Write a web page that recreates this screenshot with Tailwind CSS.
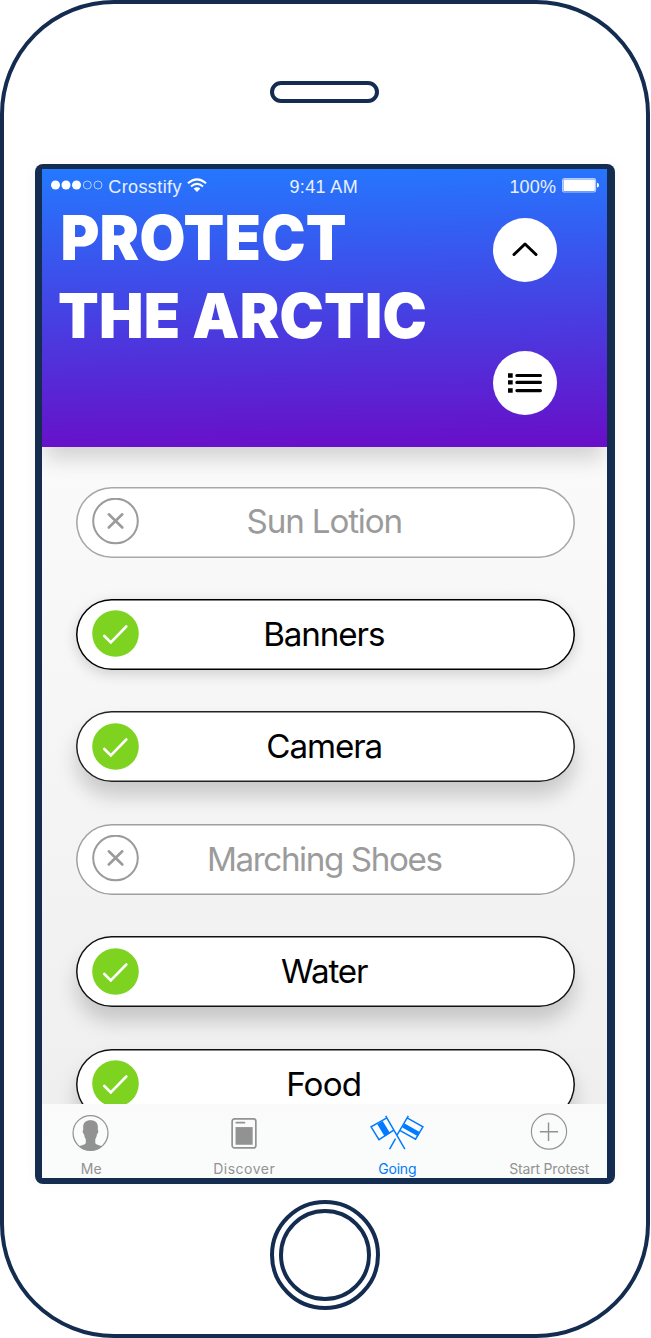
<!DOCTYPE html>
<html lang="en">
<head>
<meta charset="utf-8">
<title>Crosstify</title>
<script src="https://cdn.jsdelivr.net/npm/@tailwindcss/browser@4"></script>
</head>
<body class="bg-white font-['Inter',sans-serif] antialiased">
<div class="relative flex h-[1338px] w-[649.5px] flex-col items-center overflow-hidden rounded-[114px] border-4 border-[#132c50] bg-white">
  <div class="mt-[77px] h-[22px] w-[109px] shrink-0 rounded-full border-4 border-[#132c50]"></div>
  <!-- Screen -->
  <div class="mt-[61px] h-[1020px] w-[580px] shrink-0 rounded-[8px] bg-[#132c50] pt-[5px] pr-[7.5px] pb-[6px] pl-[7px] shadow-[0_0_14px_rgba(0,0,0,0.04)]">
    <div class="flex h-full flex-col overflow-hidden bg-linear-to-b from-[#ffffff] to-[#eeeeee]">
      <header class="relative z-10 h-[278px] shrink-0 bg-[linear-gradient(179deg,#2478ff_0%,#4640e2_52%,#6810c9_98%)] text-white shadow-[0_16px_20px_-4px_rgba(0,0,0,0.16)]">
        <div class="grid grid-cols-[1fr_auto_1fr] pt-[7px] pr-[8px] pl-[9.5px] font-['Liberation_Sans',sans-serif] text-[18px] leading-[22px] text-white/90">
          <div class="flex items-start">
            <svg class="mt-[4px] mr-[5px] h-[10px] w-[52px]" viewBox="0 0 52 10"><g fill="#fff"><circle cx="4.5" cy="5" r="4.5"/><circle cx="15" cy="5" r="4.5"/><circle cx="25.5" cy="5" r="4.5"/></g><g fill="none" stroke="#fff" stroke-width=".8" opacity=".8"><circle cx="36.3" cy="5" r="4"/><circle cx="47" cy="5" r="4"/></g></svg>
            <span class="tracking-[0.4px]">Crosstify</span>
            <svg class="mt-[2px] ml-[5px] h-[14px] w-[20px]" viewBox="0 0 20 14" fill="none" stroke="#fff" stroke-width="2"><path d="M.9 5.3Q10-2.6 19.1 5.3M4 8.4Q10 3.4 16 8.4"/><path d="M6.6 10.6Q10 8 13.4 10.6L10 14z" fill="#fff" stroke="none"/></svg>
          </div>
          <div class="pr-[3px]"><span class="tracking-[0.35px]">9:41 AM</span></div>
          <div class="flex items-start justify-end">
            <span class="tracking-[0.2px]">100%</span>
            <svg class="mt-[1.5px] ml-[6px] h-[15px] w-[37px]" viewBox="0 0 37 15"><rect x=".6" y=".6" width="33" height="13.4" rx="1.8" fill="none" stroke="#fff" stroke-opacity=".65" stroke-width="1.2"/><rect x="1.5" y="1.5" width="31.4" height="11.6" rx="1" fill="#fff"/><path d="M35 4.8Q37 5 37 7.2T35 9.6z" fill="#fff"/></svg>
          </div>
        </div>
        <div class="flex justify-between pr-[50px] pl-[16px]">
          <h1 class="origin-left scale-x-95 text-[62.5px] leading-[78px] font-black whitespace-nowrap"><span class="block pl-[2.5px] tracking-[0.200px]">PROTECT</span><span class="block tracking-[0.200px]">THE ARCTIC</span></h1>
          <div class="mt-[19.500px] flex flex-col gap-[69px]">
            <div class="flex size-[64px] items-center justify-center rounded-full bg-white">
              <svg class="size-[64px]" viewBox="0 0 64 64" fill="none" stroke="#000" stroke-width="3" stroke-linecap="round" stroke-linejoin="round"><path d="M21 36.500 32 26 43 36.500"/></svg>
            </div>
            <div class="flex size-[64px] items-center justify-center rounded-full bg-white">
              <svg class="size-[64px]" viewBox="0 0 64 64"><path d="M15 22.300h4.700v4.500H15zM15 29.300h4.700v4.200H15zM15 37.300h4.700v4.500H15z"/><path d="M23.900 24.500h23.500M23.900 31.400h23.500M23.900 39.600h23.500" stroke="#000" stroke-width="3.200" stroke-linecap="round"/></svg>
            </div>
          </div>
        </div>
      </header>

      <main class="flex h-[657px] shrink-0 flex-col gap-[41.4px] overflow-hidden px-[34px] pt-[39.600px] text-[33.2px] text-black">
        <div class="flex h-[71px] w-[499px] shrink-0 items-center rounded-full bg-white pl-[16px] text-[#9b9b9b] inset-ring-[1.6px] inset-ring-[#a8a8a8]">
          <svg class="h-[48px] w-[48px] shrink-0" viewBox="0 0 48 48" fill="none" stroke="#9b9b9b"><circle cx="23.500" cy="23" r="22.300" stroke-width="2"/><path d="m16.800 16.300 13.500 13.200m0-13.200L16.800 29.500" stroke-width="2.600" stroke-linecap="round"/></svg>
          <span class="flex-1 pr-[66px] text-center tracking-[-1.150px]">Sun Lotion</span>
        </div>
        <div class="flex h-[71px] w-[499px] shrink-0 items-center rounded-full bg-white pl-[16px] shadow-[0_4px_14px_rgba(0,0,0,0.16)] inset-ring-[1.5px] inset-ring-black">
          <svg class="h-[48px] w-[48px] shrink-0" viewBox="0 0 48 48" fill="none"><circle cx="23.500" cy="23.500" r="23.300" fill="#7ed321"/><path d="m12.300 26 6.500 6.500L34.300 16.500" stroke="#fff" stroke-width="2.600" stroke-linecap="round"/></svg>
          <span class="flex-1 pt-px pr-[67px] text-center tracking-[-1.1px]">Banners</span>
        </div>
        <div class="flex h-[71px] w-[499px] shrink-0 items-center rounded-full bg-white pl-[16px] shadow-[0_14px_20px_rgba(0,0,0,0.18)] inset-ring-[1.5px] inset-ring-[#222]">
          <svg class="h-[48px] w-[48px] shrink-0" viewBox="0 0 48 48" fill="none"><circle cx="23.500" cy="23.500" r="23.300" fill="#7ed321"/><path d="m12.300 26 6.500 6.500L34.300 16.500" stroke="#fff" stroke-width="2.600" stroke-linecap="round"/></svg>
          <span class="flex-1 pt-px pr-[66px] text-center tracking-[-1.1px]">Camera</span>
        </div>
        <div class="flex h-[71px] w-[499px] shrink-0 items-center rounded-full bg-white pl-[16px] text-[#9b9b9b] inset-ring-[1.5px] inset-ring-[#a0a0a0]">
          <svg class="h-[48px] w-[48px] shrink-0" viewBox="0 0 48 48" fill="none" stroke="#9b9b9b"><circle cx="23.500" cy="23" r="22.300" stroke-width="2"/><path d="m16.800 16.300 13.500 13.200m0-13.200L16.800 29.500" stroke-width="2.600" stroke-linecap="round"/></svg>
          <span class="flex-1 pt-px pr-[66px] text-center tracking-[-1.400px]">Marching Shoes</span>
        </div>
        <div class="flex h-[71px] w-[499px] shrink-0 items-center rounded-full bg-white pl-[16px] shadow-[0_14px_20px_rgba(0,0,0,0.18)] inset-ring-[1.5px] inset-ring-[#111]">
          <svg class="h-[48px] w-[48px] shrink-0" viewBox="0 0 48 48" fill="none"><circle cx="23.500" cy="23.500" r="23.300" fill="#7ed321"/><path d="m12.300 26 6.500 6.500L34.300 16.500" stroke="#fff" stroke-width="2.600" stroke-linecap="round"/></svg>
          <span class="flex-1 pt-px pr-[66px] text-center tracking-[-1.1px]">Water</span>
        </div>
        <div class="flex h-[71px] w-[499px] shrink-0 items-center rounded-full bg-white pl-[16px] shadow-[0_14px_20px_rgba(0,0,0,0.18)] inset-ring-[1.5px] inset-ring-[#111]">
          <svg class="h-[48px] w-[48px] shrink-0" viewBox="0 0 48 48" fill="none"><circle cx="23.500" cy="23.500" r="23.300" fill="#7ed321"/><path d="m12.300 26 6.500 6.500L34.300 16.500" stroke="#fff" stroke-width="2.600" stroke-linecap="round"/></svg>
          <span class="flex-1 pt-px pr-[67px] text-center tracking-[-0.8px]">Food</span>
        </div>
      </main>

      <nav class="flex h-[74px] shrink-0 justify-between bg-linear-to-b from-[#fafafa] to-[#fafcfc] text-[14px] leading-[18px] text-[#929292]">
        <div class="flex w-[99px] flex-col items-center pt-[10px]">
          <svg class="size-[40px]" viewBox="0 0 40 40"><circle cx="19.500" cy="20" r="18.400" fill="none" stroke="#929292" stroke-width="1.300"/><path transform="translate(-.5 0)" d="M20 6.500c4.800 0 7.900 2.700 7.800 7.500l-.2 2.700c1 .3.700 4-.8 4.500-.3 2.500-1.100 4-1.800 5.300v4.300c1.200 1.800 4.200 2 7.200 3.200A18.400 18.400 0 0 1 20 38.400 18.400 18.400 0 0 1 7.800 34c3-1.200 6-1.400 7.200-3.200v-4.300c-.7-1.300-1.500-2.800-1.800-5.300-1.500-.5-1.800-4.200-.8-4.500L12.200 14c-.1-4.800 3-7.500 7.800-7.500z" fill="#929292"/></svg>
          <span class="mt-[8px]">Me</span>
        </div>
        <div class="flex w-[118px] flex-col items-center pt-[13px]">
          <svg class="h-[34px] w-[28px]" viewBox="0 0 28 34"><rect x="1.400" y="1.900" width="25.200" height="31" rx="2.500" fill="none" stroke="#929292" stroke-width="1.800"/><path d="M5 10.700h18.200V29.500H5z" fill="#929292"/><path d="M5.800 6h8.700" stroke="#929292" stroke-width="1.800" stroke-linecap="round"/></svg>
          <span class="mt-[11px] tracking-[0.500px]">Discover</span>
        </div>
        <div class="flex w-[99px] flex-col items-center pt-[11px] text-[#007aff]">
          <svg class="h-[36px] w-[56px]" viewBox="0 0 56 36" fill="none" stroke="#007aff" stroke-width="1.500"><path d="M16.500 1 36 34.500M39.500 1 28 20.500M26.500 24 20.500 34.500M17.300 3.200 1.700 12l8 13 14.600-9.500M38.700 3.200 54.300 12l-7.500 12.500L31.300 15.800"/><path d="m7.500 9 5.500-3.200 7.500 12.300-5.500 3.400z" transform="translate(.5 .3)" fill="#007aff" stroke="none"/><path d="M36.300 8.200 52 17l-2.300 4.200L34 12.300z" transform="translate(-.6 .4)" fill="#007aff" stroke="none"/></svg>
          <span class="mt-[9.500px] tracking-[-0.2px]">Going</span>
        </div>
        <div class="flex w-[116px] flex-col items-center pt-[8px]">
          <svg class="size-[40px]" viewBox="0 0 40 40" fill="none" stroke="#929292" stroke-width="1.200"><circle cx="20" cy="20.300" r="18.300"/><path d="M10.500 20.500h19M19.500 11v19" stroke-width="1.500"/></svg>
          <span class="mt-[9.500px] tracking-[-0.200px] whitespace-nowrap">Start Protest</span>
        </div>
      </nav>
    </div>
  </div>
  <!-- Home button -->
  <div class="mt-[16px] flex size-[110px] shrink-0 items-center justify-center rounded-full border-4 border-[#132c50]">
    <div class="size-[92px] rounded-full border-4 border-[#132c50]"></div>
  </div>
</div>
</body>
</html>
